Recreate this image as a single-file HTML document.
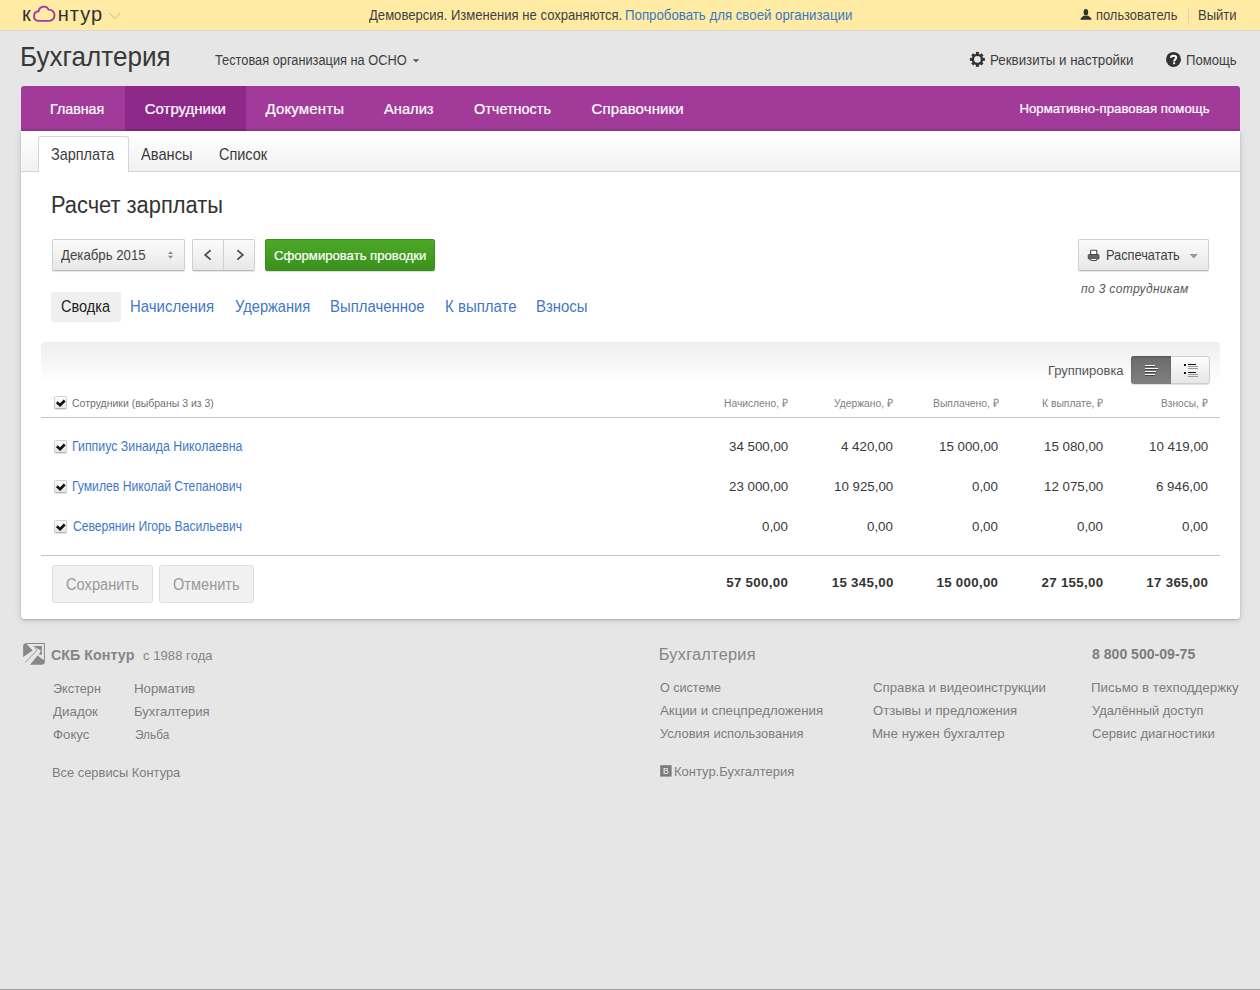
<!DOCTYPE html>
<html><head><meta charset="utf-8">
<style>
*{margin:0;padding:0;box-sizing:border-box}
html,body{width:1260px;height:990px;overflow:hidden}
body{background:#e6e6e6;font-family:"Liberation Sans",sans-serif;color:#333;position:relative}
.tx{position:absolute;white-space:nowrap;line-height:20px;font-family:"Liberation Sans",sans-serif}
.bx{position:absolute}
.btn{position:absolute;border:1px solid #d0d0d0;border-bottom-color:#b9b9b9;border-radius:2px;background:linear-gradient(#fbfbfb,#e8e8e8);box-shadow:0 1px 1px rgba(0,0,0,.10)}
.chk{position:absolute;width:13px;height:13px;border:1px solid #d2d2d2;border-bottom-color:#b5b5b5;border-radius:2px;background:linear-gradient(#fdfdfd,#e6e6e6);box-shadow:0 1px 1px rgba(0,0,0,.12)}
.chk svg{position:absolute;left:0;top:0}
.ln{position:absolute;height:1px;background:#c6c6c6}
svg{position:absolute;overflow:visible}
</style></head><body>
<!-- top bar -->
<div class="bx" style="left:0;top:0;width:1260px;height:30px;background:#ffeba4"></div>
<div class="bx" style="left:0;top:30px;width:1260px;height:1px;background:#d9d7d9"></div>
<svg style="left:0;top:0" width="1" height="1">
  <path d="M37.6,20.9 A4.9,4.9 0 0 1 38.6,11.3 A5.3,5.3 0 0 1 48.6,9.6 A5.6,5.6 0 0 1 49.2,20.9 Z" fill="none" stroke="#a13ba3" stroke-width="1.9" stroke-linejoin="round"/>
  <path d="M109.3,13 L114.8,18.6 L120.3,13" fill="none" stroke="#d8cd9c" stroke-width="1.1"/>
  <ellipse cx="1085.9" cy="12.3" rx="2.3" ry="3.3" fill="#333"/>
  <path d="M1083.4,15.8 L1088.4,15.8 L1091.4,18.6 L1091.4,19.8 L1080.6,19.8 L1080.6,18.6 Z" fill="#333"/>
</svg>
<div class="bx" style="left:1188px;top:7px;width:1px;height:17px;background:#ddd6c0"></div>

<!-- header icons -->
<svg style="left:0;top:0" width="1" height="1">
  <path d="M412.7,59.3 L419.3,59.3 L416,62.6 Z" fill="#555"/>
  <g transform="translate(977.4,59.4)" fill="#333">
    <circle r="5.7"/>
    <rect x="-1.5" y="-7.5" width="3" height="15"/>
    <rect x="-7.5" y="-1.5" width="15" height="3"/>
    <rect x="-1.5" y="-7.2" width="3" height="14.4" transform="rotate(45)"/>
    <rect x="-1.5" y="-7.2" width="3" height="14.4" transform="rotate(-45)"/>
    <circle r="3.3" fill="#e6e6e6"/>
  </g>
  <circle cx="1173.5" cy="59.4" r="7.5" fill="#333"/>
  <path d="M1171,57.8 C1171,55.2 1176.2,55 1176.2,57.6 C1176.2,59.4 1174.1,59.5 1174.1,61.4" fill="none" stroke="#fff" stroke-width="2"/>
  <rect x="1173.1" y="62.3" width="2" height="1.9" fill="#fff"/>
</svg>

<!-- card -->
<div class="bx" style="left:21px;top:130.5px;width:1219px;height:488.5px;background:#fff;border-radius:0 0 3px 3px;box-shadow:0 1px 2px rgba(0,0,0,.2),0 1px 9px rgba(0,0,0,.13)"></div>
<!-- nav -->
<div class="bx" style="left:21px;top:86px;width:1219px;height:44.5px;background:#a13a98;border-radius:3px 3px 0 0"></div>
<div class="bx" style="left:125px;top:86px;width:120.5px;height:44.5px;background:#8e2888"></div>
<div class="bx" style="left:21px;top:129px;width:1219px;height:1.5px;background:rgba(0,0,0,.10)"></div>

<!-- card -->

<div class="bx" style="left:21px;top:130.5px;width:1219px;height:41px;background:linear-gradient(#fff,#f1f1f1);border-bottom:1px solid #d3d3d3"></div>
<div class="bx" style="left:37.5px;top:136px;width:91px;height:36px;background:#fff;border:1px solid #d6d6d6;border-bottom:none;border-radius:3px 3px 0 0"></div>

<!-- controls -->
<div class="btn" style="left:52px;top:239px;width:133px;height:32px"></div>
<svg style="left:0;top:0" width="1" height="1">
  <path d="M168,254 L173,254 L170.5,251.3 Z" fill="#8a8a8a"/>
  <path d="M168,255.8 L173,255.8 L170.5,258.8 Z" fill="#8a8a8a"/>
</svg>
<div class="btn" style="left:192px;top:239px;width:32px;height:32px;border-radius:2px 0 0 2px"></div>
<div class="btn" style="left:223px;top:239px;width:32px;height:32px;border-radius:0 2px 2px 0"></div>
<svg style="left:0;top:0" width="1" height="1">
  <path d="M210.6,250.2 L205.2,254.9 L210.6,259.6" fill="none" stroke="#505050" stroke-width="1.8"/>
  <path d="M237.4,250.2 L242.8,254.9 L237.4,259.6" fill="none" stroke="#505050" stroke-width="1.8"/>
</svg>
<div class="bx" style="left:265px;top:239px;width:170px;height:32px;border-radius:2px;background:linear-gradient(#4caa28,#3a901b);border:1px solid #3b8d1f;box-shadow:0 1px 1px rgba(0,0,0,.15)"></div>
<div class="btn" style="left:1077.5px;top:239px;width:131px;height:32px"></div>
<svg style="left:0;top:0" width="1" height="1">
  <rect x="1090.6" y="250.3" width="6.2" height="4.6" fill="#fff" stroke="#444" stroke-width="1.1" rx="0.8"/>
  <rect x="1088.2" y="254.5" width="10.8" height="4.6" fill="#666" stroke="#444" stroke-width="0.9" rx="1"/>
  <rect x="1090.6" y="258.3" width="6.2" height="2.2" fill="#fff" stroke="#444" stroke-width="1" rx="0.6"/>
  <path d="M1189.6,254 L1198,254 L1193.8,258.4 Z" fill="#999"/>
</svg>

<!-- pills -->
<div class="bx" style="left:51px;top:292px;width:70px;height:30px;background:#efefef;border-radius:3px"></div>

<!-- table -->
<div class="bx" style="left:41px;top:342px;width:1179px;height:40px;background:linear-gradient(#eeeeee,#ffffff);border-radius:4px 4px 0 0"></div>
<div class="bx" style="left:1131px;top:356px;width:78.5px;height:28px;border-radius:3px;background:linear-gradient(#fcfcfc,#e6e6e6);border:1px solid #cdcdcd;box-shadow:0 1px 1px rgba(0,0,0,.12)"></div>
<div class="bx" style="left:1131px;top:356px;width:40px;height:28px;border-radius:3px 0 0 3px;background:linear-gradient(#6b6b6b,#808080);box-shadow:inset 0 1px 2px rgba(0,0,0,.25)"></div>
<svg style="left:0;top:0" width="1" height="1">
  <g fill="#fff">
    <rect x="1145" y="365" width="10" height="1"/><rect x="1145" y="368" width="13" height="1"/><rect x="1145" y="371" width="11" height="1"/><rect x="1145" y="374" width="10" height="1"/>
  </g>
  <g fill="#454545">
    <rect x="1145" y="366" width="10" height="1"/><rect x="1145" y="369" width="13" height="1"/><rect x="1145" y="372" width="11" height="1"/><rect x="1145" y="375" width="10" height="1"/>
  </g>
  <g fill="#111">
    <rect x="1184" y="364" width="2" height="2"/><rect x="1184" y="372" width="2" height="2"/>
    <rect x="1188" y="364" width="8" height="1"/><rect x="1188" y="372" width="8" height="1"/>
  </g>
  <g fill="#9a9a9a">
    <rect x="1188" y="366" width="10" height="1"/><rect x="1188" y="368" width="10" height="1"/><rect x="1188" y="374" width="10" height="1"/><rect x="1188" y="376" width="10" height="1"/>
  </g>
</svg>

<div class="chk" style="left:53.5px;top:396px"><svg width="11" height="11"><path d="M1.8,5.3 L5.1,8.2 L9.7,3.5" fill="none" stroke="#111" stroke-width="2.6"/></svg></div>
<div class="ln" style="left:41px;top:417px;width:1179px"></div>
<div class="chk" style="left:53.5px;top:439.5px"><svg width="11" height="11"><path d="M1.8,5.3 L5.1,8.2 L9.7,3.5" fill="none" stroke="#111" stroke-width="2.6"/></svg></div>
<div class="chk" style="left:53.5px;top:479.5px"><svg width="11" height="11"><path d="M1.8,5.3 L5.1,8.2 L9.7,3.5" fill="none" stroke="#111" stroke-width="2.6"/></svg></div>
<div class="chk" style="left:53.5px;top:519.5px"><svg width="11" height="11"><path d="M1.8,5.3 L5.1,8.2 L9.7,3.5" fill="none" stroke="#111" stroke-width="2.6"/></svg></div>
<div class="ln" style="left:41px;top:555px;width:1179px"></div>
<div class="bx" style="left:52px;top:565px;width:101px;height:38px;background:#f1f1f1;border:1px solid #dedede;border-radius:3px"></div>
<div class="bx" style="left:159px;top:565px;width:95px;height:38px;background:#f1f1f1;border:1px solid #dedede;border-radius:3px"></div>

<!-- footer icons -->
<svg style="left:0;top:0" width="1" height="1">
  <g transform="translate(22,642)" fill="#888">
    <path d="M1.1,15 L1.1,4.6 Q1.1,1.0 4.6,1.0 L4.6,1.9 L10.7,8.4 Z"/>
    <path d="M4.6,1.0 L22.9,1.0 L22.9,18.9 L21.9,18.9 L21.9,1.9 L4.6,1.9 Z"/>
    <path d="M10.9,4.1 L19.9,4.1 L19.9,12.8 L16.9,12.8 L18.9,8.5 Z"/>
    <path d="M8,22.8 L15.5,13.6 L22.9,18.9 L22.9,19.6 Q22.9,22.8 19.6,22.8 Z"/>
    <path d="M13.1,5.6 L14.8,8.4 L3.2,20.6" stroke="#888" stroke-width="0.8" fill="none"/>
  </g>
  <rect x="660.2" y="765.2" width="11.4" height="11.4" fill="#7b7b7b"/>
</svg>
<div class="tx" style="left:663px;top:761px;font-size:8.5px;color:#e8e8e8;-webkit-text-stroke:0.2px #e8e8e8">В</div>
<div class="bx" style="left:0;top:989px;width:1260px;height:1px;background:#a0a0a0"></div>

<div class="tx" style="left:368.60px;top:5.20px;font-size:14.2px;color:#3f3f3f;transform:scaleX(0.9217);transform-origin:0 0">Демоверсия. Изменения не сохраняются.</div>
<div class="tx" style="left:624.77px;top:5.20px;font-size:14.2px;color:#3b78c0;transform:scaleX(0.9342);transform-origin:0 0">Попробовать для своей организации</div>
<div class="tx" style="left:1095.70px;top:5.00px;font-size:14.2px;color:#3f3f3f;transform:scaleX(0.9085);transform-origin:0 0">пользователь</div>
<div class="tx" style="left:1198.48px;top:5.00px;font-size:14.2px;color:#3f3f3f;transform:scaleX(0.9181);transform-origin:0 0">Выйти</div>
<div class="tx" style="left:22.10px;top:3.50px;font-size:20px;color:#2f3038">к</div>
<div class="tx" style="left:57.80px;top:3.50px;font-size:20px;color:#2f3038;letter-spacing:1.032px">нтур</div>
<div class="tx" style="left:19.84px;top:47.00px;font-size:28px;color:#383838;transform:scaleX(0.9309);transform-origin:0 0">Бухгалтерия</div>
<div class="tx" style="left:215.00px;top:50.20px;font-size:14px;color:#3f3f3f;transform:scaleX(0.9134);transform-origin:0 0">Тестовая организация на ОСНО</div>
<div class="tx" style="left:990.05px;top:50.30px;font-size:14px;color:#3f3f3f;transform:scaleX(0.9526);transform-origin:0 0">Реквизиты и настройки</div>
<div class="tx" style="left:1185.76px;top:50.30px;font-size:14px;color:#3f3f3f;transform:scaleX(0.9379);transform-origin:0 0">Помощь</div>
<div class="tx" style="left:50.05px;top:99.30px;font-size:15px;color:#fff;transform:scaleX(0.9505);transform-origin:0 0;-webkit-text-stroke:0.22px #fff">Главная</div>
<div class="tx" style="left:144.70px;top:99.30px;font-size:15px;color:#fff;-webkit-text-stroke:0.22px #fff">Сотрудники</div>
<div class="tx" style="left:265.50px;top:99.30px;font-size:15px;color:#fff;letter-spacing:0.157px;-webkit-text-stroke:0.22px #fff">Документы</div>
<div class="tx" style="left:383.70px;top:99.30px;font-size:15px;color:#fff;transform:scaleX(0.9791);transform-origin:0 0;-webkit-text-stroke:0.22px #fff">Анализ</div>
<div class="tx" style="left:473.90px;top:99.30px;font-size:15px;color:#fff;transform:scaleX(0.9630);transform-origin:0 0;-webkit-text-stroke:0.22px #fff">Отчетность</div>
<div class="tx" style="left:591.50px;top:99.30px;font-size:15px;color:#fff;letter-spacing:0.131px;-webkit-text-stroke:0.22px #fff">Справочники</div>
<div class="tx" style="left:1019.40px;top:98.80px;font-size:13.2px;color:#fff;letter-spacing:0.034px;-webkit-text-stroke:0.22px #fff">Нормативно-правовая помощь</div>
<div class="tx" style="left:51.40px;top:145.00px;font-size:15.9px;color:#3a3a3a;transform:scaleX(0.9091);transform-origin:0 0">Зарплата</div>
<div class="tx" style="left:141.00px;top:145.00px;font-size:15.9px;color:#3a3a3a;transform:scaleX(0.9220);transform-origin:0 0">Авансы</div>
<div class="tx" style="left:219.00px;top:145.00px;font-size:15.9px;color:#3a3a3a;transform:scaleX(0.9106);transform-origin:0 0">Список</div>
<div class="tx" style="left:51.26px;top:194.70px;font-size:23.3px;color:#333;transform:scaleX(0.9383);transform-origin:0 0">Расчет зарплаты</div>
<div class="tx" style="left:61.00px;top:245.40px;font-size:14.5px;color:#444;transform:scaleX(0.9121);transform-origin:0 0">Декабрь 2015</div>
<div class="tx" style="left:274.30px;top:245.50px;font-size:13.6px;color:#fff;transform:scaleX(0.9651);transform-origin:0 0;-webkit-text-stroke:0.22px #fff">Сформировать проводки</div>
<div class="tx" style="left:1105.98px;top:244.50px;font-size:13.9px;color:#3f3f3f;transform:scaleX(0.9201);transform-origin:0 0">Распечатать</div>
<div class="tx" style="left:1081.00px;top:278.50px;font-size:12px;color:#555;letter-spacing:0.348px;font-style:italic">по 3 сотрудникам</div>
<div class="tx" style="left:61.20px;top:297.40px;font-size:15.6px;color:#222;transform:scaleX(0.9308);transform-origin:0 0">Сводка</div>
<div class="tx" style="left:130.24px;top:297.40px;font-size:15.6px;color:#3f78c6;transform:scaleX(0.9593);transform-origin:0 0">Начисления</div>
<div class="tx" style="left:235.00px;top:297.40px;font-size:15.6px;color:#3f78c6;transform:scaleX(0.9402);transform-origin:0 0">Удержания</div>
<div class="tx" style="left:330.44px;top:297.40px;font-size:15.6px;color:#3f78c6;transform:scaleX(0.9560);transform-origin:0 0">Выплаченное</div>
<div class="tx" style="left:444.74px;top:297.40px;font-size:15.6px;color:#3f78c6;transform:scaleX(0.9622);transform-origin:0 0">К выплате</div>
<div class="tx" style="left:535.74px;top:297.40px;font-size:15.6px;color:#3f78c6;transform:scaleX(0.9576);transform-origin:0 0">Взносы</div>
<div class="tx" style="left:1047.70px;top:360.60px;font-size:13px;color:#555;transform:scaleX(0.9964);transform-origin:0 0">Группировка</div>
<div class="tx" style="left:72.30px;top:393.10px;font-size:11.7px;color:#707070;transform:scaleX(0.8968);transform-origin:0 0">Сотрудники (выбраны 3 из 3)</div>
<div class="tx" style="left:724.10px;top:392.90px;font-size:11.7px;color:#808080;transform:scaleX(0.8778);transform-origin:0 0">Начислено, ₽</div>
<div class="tx" style="left:834.00px;top:392.90px;font-size:11.7px;color:#808080;transform:scaleX(0.8808);transform-origin:0 0">Удержано, ₽</div>
<div class="tx" style="left:932.50px;top:392.90px;font-size:11.7px;color:#808080;transform:scaleX(0.8831);transform-origin:0 0">Выплачено, ₽</div>
<div class="tx" style="left:1042.40px;top:392.90px;font-size:11.7px;color:#808080;transform:scaleX(0.8864);transform-origin:0 0">К выплате, ₽</div>
<div class="tx" style="left:1161.40px;top:392.90px;font-size:11.7px;color:#808080;transform:scaleX(0.8673);transform-origin:0 0">Взносы, ₽</div>
<div class="tx" style="left:71.62px;top:436.20px;font-size:14px;color:#3f78c6;transform:scaleX(0.8821);transform-origin:0 0">Гиппиус Зинаида Николаевна</div>
<div class="tx" style="left:71.63px;top:476.20px;font-size:14px;color:#3f78c6;transform:scaleX(0.8707);transform-origin:0 0">Гумилев Николай Степанович</div>
<div class="tx" style="left:72.50px;top:516.20px;font-size:14px;color:#3f78c6;transform:scaleX(0.8682);transform-origin:0 0">Северянин Игорь Васильевич</div>
<div class="tx" style="left:66.40px;top:575.10px;font-size:15.8px;color:#999;transform:scaleX(0.9276);transform-origin:0 0">Сохранить</div>
<div class="tx" style="left:173.40px;top:575.10px;font-size:15.8px;color:#999;transform:scaleX(0.9228);transform-origin:0 0">Отменить</div>
<div class="tx" style="left:51.30px;top:644.70px;font-size:14.7px;color:#858585;transform:scaleX(0.9749);transform-origin:0 0;font-weight:bold">СКБ Контур</div>
<div class="tx" style="left:143.00px;top:645.70px;font-size:13px;color:#858585;letter-spacing:0.067px">с 1988 года</div>
<div class="tx" style="left:52.50px;top:679.00px;font-size:13.5px;color:#7d7d7d;transform:scaleX(0.9395);transform-origin:0 0">Экстерн</div>
<div class="tx" style="left:52.50px;top:702.20px;font-size:13.5px;color:#7d7d7d;transform:scaleX(0.9873);transform-origin:0 0">Диадок</div>
<div class="tx" style="left:52.50px;top:725.20px;font-size:13.5px;color:#7d7d7d;transform:scaleX(0.9806);transform-origin:0 0">Фокус</div>
<div class="tx" style="left:134.32px;top:679.00px;font-size:13.5px;color:#7d7d7d;transform:scaleX(0.9839);transform-origin:0 0">Норматив</div>
<div class="tx" style="left:134.33px;top:702.20px;font-size:13.5px;color:#7d7d7d;transform:scaleX(0.9705);transform-origin:0 0">Бухгалтерия</div>
<div class="tx" style="left:135.30px;top:725.20px;font-size:13.5px;color:#7d7d7d;transform:scaleX(0.8765);transform-origin:0 0">Эльба</div>
<div class="tx" style="left:51.55px;top:763.20px;font-size:13.5px;color:#7d7d7d;transform:scaleX(0.9540);transform-origin:0 0">Все сервисы Контура</div>
<div class="tx" style="left:658.70px;top:644.00px;font-size:16.3px;color:#858585;letter-spacing:0.278px">Бухгалтерия</div>
<div class="tx" style="left:659.70px;top:678.00px;font-size:13.5px;color:#7d7d7d;transform:scaleX(0.9307);transform-origin:0 0">О системе</div>
<div class="tx" style="left:659.70px;top:701.00px;font-size:13.5px;color:#7d7d7d;transform:scaleX(0.9813);transform-origin:0 0">Акции и спецпредложения</div>
<div class="tx" style="left:659.70px;top:723.50px;font-size:13.5px;color:#7d7d7d;transform:scaleX(0.9584);transform-origin:0 0">Условия использования</div>
<div class="tx" style="left:674.34px;top:761.80px;font-size:13.5px;color:#7d7d7d;transform:scaleX(0.9613);transform-origin:0 0">Контур.Бухгалтерия</div>
<div class="tx" style="left:872.70px;top:678.00px;font-size:13.5px;color:#7d7d7d;transform:scaleX(0.9805);transform-origin:0 0">Справка и видеоинструкции</div>
<div class="tx" style="left:872.70px;top:701.00px;font-size:13.5px;color:#7d7d7d;transform:scaleX(0.9695);transform-origin:0 0">Отзывы и предложения</div>
<div class="tx" style="left:871.71px;top:724.00px;font-size:13.5px;color:#7d7d7d;transform:scaleX(0.9891);transform-origin:0 0">Мне нужен бухгалтер</div>
<div class="tx" style="left:1092.40px;top:644.40px;font-size:14.5px;color:#7d7d7d;transform:scaleX(0.9703);transform-origin:0 0;font-weight:bold">8 800 500-09-75</div>
<div class="tx" style="left:1091.41px;top:678.00px;font-size:13.5px;color:#7d7d7d;transform:scaleX(0.9875);transform-origin:0 0">Письмо в техподдержку</div>
<div class="tx" style="left:1092.40px;top:701.00px;font-size:13.5px;color:#7d7d7d;transform:scaleX(0.9543);transform-origin:0 0">Удалённый доступ</div>
<div class="tx" style="left:1092.40px;top:724.00px;font-size:13.5px;color:#7d7d7d;transform:scaleX(0.9685);transform-origin:0 0">Сервис диагностики</div>
<div class="tx" style="left:728.57px;top:437.00px;font-size:13.4px;color:#3a3a3a;transform:scaleX(0.9950);transform-origin:0 0">34 500,00</div>
<div class="tx" style="left:841.48px;top:437.00px;font-size:13.4px;color:#3a3a3a;transform:scaleX(0.9950);transform-origin:0 0">4 420,00</div>
<div class="tx" style="left:938.77px;top:437.00px;font-size:13.4px;color:#3a3a3a;transform:scaleX(0.9950);transform-origin:0 0">15 000,00</div>
<div class="tx" style="left:1043.87px;top:437.00px;font-size:13.4px;color:#3a3a3a;transform:scaleX(0.9950);transform-origin:0 0">15 080,00</div>
<div class="tx" style="left:1148.67px;top:437.00px;font-size:13.4px;color:#3a3a3a;transform:scaleX(0.9950);transform-origin:0 0">10 419,00</div>
<div class="tx" style="left:728.57px;top:477.00px;font-size:13.4px;color:#3a3a3a;transform:scaleX(0.9950);transform-origin:0 0">23 000,00</div>
<div class="tx" style="left:834.07px;top:477.00px;font-size:13.4px;color:#3a3a3a;transform:scaleX(0.9950);transform-origin:0 0">10 925,00</div>
<div class="tx" style="left:972.11px;top:477.00px;font-size:13.4px;color:#3a3a3a;transform:scaleX(0.9950);transform-origin:0 0">0,00</div>
<div class="tx" style="left:1043.87px;top:477.00px;font-size:13.4px;color:#3a3a3a;transform:scaleX(0.9950);transform-origin:0 0">12 075,00</div>
<div class="tx" style="left:1156.08px;top:477.00px;font-size:13.4px;color:#3a3a3a;transform:scaleX(0.9950);transform-origin:0 0">6 946,00</div>
<div class="tx" style="left:761.91px;top:517.00px;font-size:13.4px;color:#3a3a3a;transform:scaleX(0.9950);transform-origin:0 0">0,00</div>
<div class="tx" style="left:867.41px;top:517.00px;font-size:13.4px;color:#3a3a3a;transform:scaleX(0.9950);transform-origin:0 0">0,00</div>
<div class="tx" style="left:972.11px;top:517.00px;font-size:13.4px;color:#3a3a3a;transform:scaleX(0.9950);transform-origin:0 0">0,00</div>
<div class="tx" style="left:1077.21px;top:517.00px;font-size:13.4px;color:#3a3a3a;transform:scaleX(0.9950);transform-origin:0 0">0,00</div>
<div class="tx" style="left:1182.01px;top:517.00px;font-size:13.4px;color:#3a3a3a;transform:scaleX(0.9950);transform-origin:0 0">0,00</div>
<div class="tx" style="left:726.24px;top:573.00px;font-size:13.3px;color:#333;letter-spacing:0.300px;font-weight:bold">57 500,00</div>
<div class="tx" style="left:831.74px;top:573.00px;font-size:13.3px;color:#333;letter-spacing:0.300px;font-weight:bold">15 345,00</div>
<div class="tx" style="left:936.44px;top:573.00px;font-size:13.3px;color:#333;letter-spacing:0.300px;font-weight:bold">15 000,00</div>
<div class="tx" style="left:1041.54px;top:573.00px;font-size:13.3px;color:#333;letter-spacing:0.300px;font-weight:bold">27 155,00</div>
<div class="tx" style="left:1146.34px;top:573.00px;font-size:13.3px;color:#333;letter-spacing:0.300px;font-weight:bold">17 365,00</div>
</body></html>
